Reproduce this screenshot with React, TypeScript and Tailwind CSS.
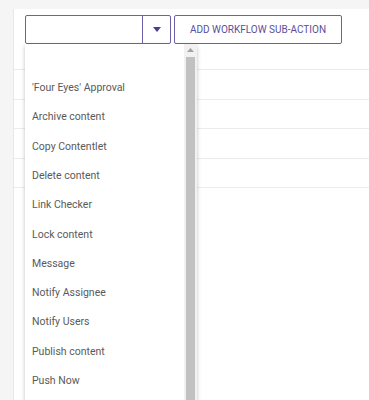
const ACTIONS = [
  "",
  "'Four Eyes' Approval",
  "Archive content",
  "Copy Contentlet",
  "Delete content",
  "Link Checker",
  "Lock content",
  "Message",
  "Notify Assignee",
  "Notify Users",
  "Publish content",
  "Push Now",
];

function SubActionSelect() {
  return (
    <div className="flex h-[29px] w-[146px] items-stretch rounded-[2px] border border-[#6b61a9] bg-white">
      <div className="flex-1" />
      <div className="flex w-[28px] items-center justify-center border-l border-[#6b61a9]">
        <svg width="8" height="5" viewBox="0 0 8 5">
          <path d="M0 0 L8 0 L4 5 Z" fill="#4b3f8c" />
        </svg>
      </div>
    </div>
  );
}

function ActionList() {
  return (
    <div className="absolute left-[25px] top-[44px] flex h-[380px] w-[172px] bg-white shadow-[0_2px_4px_rgba(0,0,0,0.25)]">
      <ul className="flex-1 overflow-hidden">
        {ACTIONS.map((a, i) => (
          <li
            key={i}
            className="flex h-[29.3px] items-center px-[7px] text-[10.5px] text-[#5a5a5a]"
          >
            {a}
          </li>
        ))}
      </ul>
      <div className="flex w-[13px] flex-col items-center bg-[#f1f1f1] pt-[4px]">
        <svg width="7" height="4" viewBox="0 0 7 4" className="mb-[5px]">
          <path d="M0 4 L7 4 L3.5 0 Z" fill="#a3a3a3" />
        </svg>
        <div className="w-[9px] flex-1 bg-[#c1c1c1]" />
      </div>
    </div>
  );
}

export default function App() {
  return (
    <div
      className="relative h-[400px] overflow-hidden bg-[#f5f5f5] pl-[13px] pt-[9px]"
      style={{ fontFamily: "Roboto, 'Liberation Sans', sans-serif" }}
    >
      <div className="h-full border-l border-[#e8e8e8] bg-white pt-[6px]">
        <div className="flex gap-[3px] pl-[11px]">
          <SubActionSelect />
          <button className="h-[29px] w-[168px] rounded-[2px] border border-[#6b61a9] bg-white text-[10px] text-[#5b4f9a]">
            ADD WORKFLOW SUB-ACTION
          </button>
        </div>
        <div className="mt-[-3.5px]">
          {[0, 1, 2, 3, 4].map((r) => (
            <div key={r} className="h-[29.5px] border-b border-[#ececec]" />
          ))}
        </div>
      </div>
      <ActionList />
    </div>
  );
}
